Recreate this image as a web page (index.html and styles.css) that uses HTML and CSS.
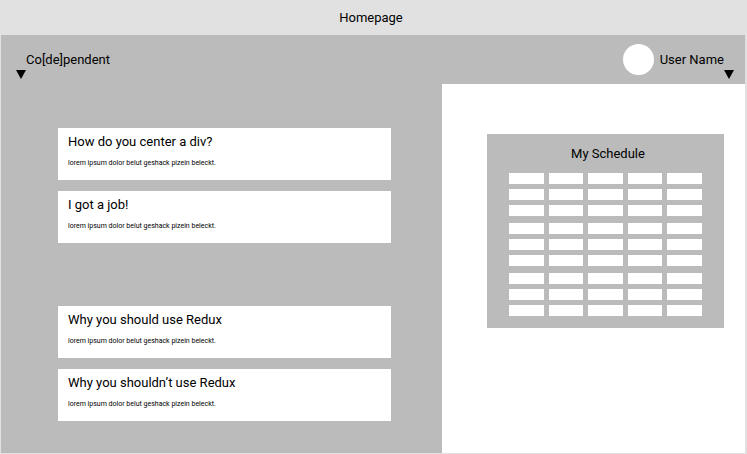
FILE: index.html
```html
<!DOCTYPE html>
<html lang="en">
<head>
<meta charset="utf-8">
<title>Homepage</title>
<link rel="stylesheet" href="styles.css">
</head>
<body>
<h1 class="page-title">Homepage</h1>
<div class="frame">
  <header class="topbar">
    <div class="brand">
      <a class="brand-name" href="#">Co[de]pendent</a>
      <button class="toggle toggle-left" type="button" aria-label="Open site menu"><svg viewBox="0 0 10 9"><path d="M0 0h10L5 9z"/></svg></button>
    </div>
    <div class="user">
      <span class="avatar"></span>
      <span class="user-name">User Name</span>
      <button class="toggle toggle-right" type="button" aria-label="Open user menu"><svg viewBox="0 0 10 9"><path d="M0 0h10L5 9z"/></svg></button>
    </div>
  </header>
  <div class="columns">
    <main class="feed">
      <section class="group">
        <article class="card"><h2>How do you center a div?</h2><p>lorem ipsum dolor belut geshack pizein beleckt.</p></article>
        <article class="card"><h2>I got a job!</h2><p>lorem ipsum dolor belut geshack pizein beleckt.</p></article>
      </section>
      <section class="group">
        <article class="card"><h2>Why you should use Redux</h2><p>lorem ipsum dolor belut geshack pizein beleckt.</p></article>
        <article class="card"><h2>Why you shouldn’t use Redux</h2><p>lorem ipsum dolor belut geshack pizein beleckt.</p></article>
      </section>
    </main>
    <aside class="side">
      <section class="schedule">
        <h2>My Schedule</h2>
        <table class="slots">
          <tbody>
            <tr><td></td><td></td><td></td><td></td><td></td></tr>
            <tr><td></td><td></td><td></td><td></td><td></td></tr>
            <tr><td></td><td></td><td></td><td></td><td></td></tr>
          </tbody>
          <tbody>
            <tr><td></td><td></td><td></td><td></td><td></td></tr>
            <tr><td></td><td></td><td></td><td></td><td></td></tr>
            <tr><td></td><td></td><td></td><td></td><td></td></tr>
          </tbody>
          <tbody>
            <tr><td></td><td></td><td></td><td></td><td></td></tr>
            <tr><td></td><td></td><td></td><td></td><td></td></tr>
            <tr><td></td><td></td><td></td><td></td><td></td></tr>
          </tbody>
        </table>
      </section>
    </aside>
  </div>
</div>
</body>
</html>
```

FILE: styles.css
```css
* { box-sizing: border-box; }

body {
  margin: 0;
  min-height: 100vh;
  display: flex;
  flex-direction: column;
  background: #e1e1e1;
  color: #000;
  font: 13px/16px Roboto, sans-serif;
}

h1, h2, p { margin: 0; font-weight: 400; }
h1, h2 { font-size: 13px; line-height: 16px; }

.page-title { padding: 10px 8px 9px 3px; text-align: center; }

.frame {
  flex: 1;
  display: flex;
  flex-direction: column;
  margin: 0 2px 1px 1px;
  background: #bbb;
}

.topbar {
  display: flex;
  justify-content: space-between;
  padding: 9px 21px 9px 25px;
}

.brand, .user { position: relative; display: flex; align-items: center; gap: 6px; }
.brand-name { color: inherit; text-decoration: none; }
.avatar { width: 31px; height: 31px; border-radius: 50%; background: #fff; }

.toggle {
  position: absolute;
  top: 26px;
  padding: 0;
  border: 0;
  background: none;
  cursor: pointer;
}
.toggle svg { display: block; width: 10px; height: 9px; }
.toggle-left { left: -10px; }
.toggle-right { right: -10px; }

.columns { flex: 1; display: grid; grid-template-columns: 441fr 303fr; }

.feed {
  display: flex;
  flex-direction: column;
  gap: 63px;
  padding: 44px 51px 31px 57px;
}
.group { display: grid; gap: 11px; }
.card { padding: 6px 10px 12px; background: #fff; }
.card h2 { margin-bottom: 9px; }
.card p { font-size: 7px; line-height: 9px; }

.side { padding: 50px 21px 32px 45px; background: #fff; }
.schedule { padding: 12px 22px; background: #bbb; }
.schedule h2 { margin-bottom: 11px; padding-left: 5px; text-align: center; }

.slots, .slots tbody, .slots tr { display: grid; }
.slots { gap: 7px; }
.slots tbody { gap: 5px; }
.slots tr { grid-template-columns: repeat(5, 1fr); gap: 5px; }
.slots td { height: 11px; padding: 0; background: #fff; }
```
